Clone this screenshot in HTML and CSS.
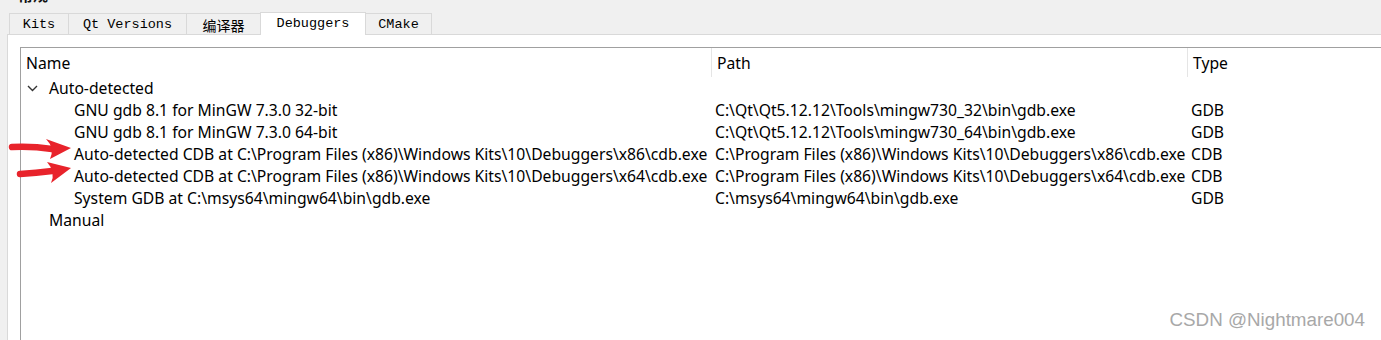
FILE: index.html
```html
<!DOCTYPE html>
<html lang="en">

<head>
    <meta charset="UTF-8">
    <title>Debuggers</title>
    <link rel="stylesheet" href="styles.css">
</head>

<body>
    <div class="titleClip"><span class="titleText">常规</span></div>

    <div class="tabBar">
        <div class="tab">Kits</div>
        <div class="tab">Qt Versions</div>
        <div class="tab">编译器</div>
        <div class="tab active">Debuggers</div>
        <div class="tab">CMake</div>
    </div>

    <div class="tabPanel">
        <div class="tree">
            <div class="treeHeader">
                <div class="colName">Name</div>
                <div class="colPath">Path</div>
                <div class="colType">Type</div>
            </div>

            <div class="row">
                <div class="colName group">
                    <svg class="chevron" width="11" height="7" viewBox="0 0 11 7">
                        <polyline points="1,1 5.5,5.5 10,1" stroke="#333" stroke-width="1.4" fill="none" />
                    </svg>Auto-detected
                </div>
                <div class="colPath"></div>
                <div class="colType"></div>
            </div>
            <div class="row">
                <div class="colName child">GNU gdb 8.1 for MinGW 7.3.0 32-bit</div>
                <div class="colPath">C:\Qt\Qt5.12.12\Tools\mingw730_32\bin\gdb.exe</div>
                <div class="colType">GDB</div>
            </div>
            <div class="row">
                <div class="colName child">GNU gdb 8.1 for MinGW 7.3.0 64-bit</div>
                <div class="colPath">C:\Qt\Qt5.12.12\Tools\mingw730_64\bin\gdb.exe</div>
                <div class="colType">GDB</div>
            </div>
            <div class="row">
                <div class="colName child">Auto-detected CDB at C:\Program Files (x86)\Windows Kits\10\Debuggers\x86\cdb.exe</div>
                <div class="colPath">C:\Program Files (x86)\Windows Kits\10\Debuggers\x86\cdb.exe</div>
                <div class="colType">CDB</div>
            </div>
            <div class="row">
                <div class="colName child">Auto-detected CDB at C:\Program Files (x86)\Windows Kits\10\Debuggers\x64\cdb.exe</div>
                <div class="colPath">C:\Program Files (x86)\Windows Kits\10\Debuggers\x64\cdb.exe</div>
                <div class="colType">CDB</div>
            </div>
            <div class="row">
                <div class="colName child">System GDB at C:\msys64\mingw64\bin\gdb.exe</div>
                <div class="colPath">C:\msys64\mingw64\bin\gdb.exe</div>
                <div class="colType">GDB</div>
            </div>
            <div class="row">
                <div class="colName group">Manual</div>
                <div class="colPath"></div>
                <div class="colType"></div>
            </div>
        </div>
    </div>

    <!-- annotation arrows drawn on top of the screenshot -->
    <svg class="arrows" width="80" height="50" viewBox="0 0 80 50">
        <path d="M12 7 Q32 6 52 9" stroke="#e8232b" stroke-width="6.5" stroke-linecap="round" fill="none" />
        <path d="M46 -1 L71 8 L50 19 Q55 8 46 -1 Z" fill="#e8232b" />
        <path d="M20 34 Q36 33 52 31" stroke="#e8232b" stroke-width="6.5" stroke-linecap="round" fill="none" />
        <path d="M47 22 L71 28 L51 43 Q56 32 47 22 Z" fill="#e8232b" />
    </svg>

    <div class="watermark">CSDN @Nightmare004</div>
</body>

</html>
```

FILE: styles.css
```css
body {
    margin: 0;
    background-color: #f0f0f0;
    font-family: "Noto Sans", sans-serif;
    width: 1381px;
    height: 340px;
    overflow: hidden;
    position: relative;
}

.titleClip {
    height: 13px;
    overflow: hidden;
    padding-left: 18px;
}

.titleText {
    display: block;
    margin-top: -14px;
    font-weight: bold;
    font-size: 15px;
    line-height: 17px;
    color: #111;
    font-family: "Noto Sans CJK SC", sans-serif;
}

.tabBar {
    display: flex;
    padding-left: 9px;
    height: 21px;
    align-items: flex-end;
}

.tab {
    height: 20px;
    line-height: 22px;
    border: 1px solid #d9d9d9;
    border-bottom: none;
    background-color: #f0f0f0;
    font-family: "Liberation Mono", monospace;
    font-size: 13.5px;
    color: #000;
    text-align: center;
    margin-left: -1px;
}

.tab:nth-child(1) { width: 58px; margin-left: 0; }
.tab:nth-child(2) { width: 117px; }
.tab:nth-child(3) { width: 73px; font-family: "Noto Sans CJK SC", sans-serif; font-size: 14px; }
.tab:nth-child(4) { width: 104px; }
.tab:nth-child(5) { width: 65px; }

.tab.active {
    background-color: #ffffff;
    height: 22px;
    line-height: 22px;
    margin-bottom: -1px;
    position: relative;
    z-index: 1;
}

.tabPanel {
    margin-left: 7px;
    background-color: #ffffff;
    border-top: 1px solid #d9d9d9;
    border-left: 1px solid #d9d9d9;
    padding: 12px 0 0 12px;
    height: 300px;
}

.tree {
    border-top: 1px solid #a0a0a0;
    border-left: 1px solid #a0a0a0;
    height: 100%;
    font-size: 15.7px;
    color: #000;
}

.treeHeader,
.row {
    display: flex;
    white-space: nowrap;
}

.treeHeader {
    height: 29px;
    align-items: center;
}

.treeHeader > div {
    height: 29px;
    line-height: 29px;
    padding-top: 1px;
}

.treeHeader .colPath,
.treeHeader .colType {
    border-left: 1px solid #e5e5e5;
}

.treeHeader .colName { padding-left: 5px; }
.treeHeader .colPath { padding-left: 5px; }
.treeHeader .colType { padding-left: 5px; }

.row {
    height: 22px;
    line-height: 22px;
}

.colName {
    width: 690px;
    flex: none;
    box-sizing: border-box;
}

.colPath {
    width: 476px;
    flex: none;
    box-sizing: border-box;
    padding-left: 4px;
}

.colType {
    flex: 1;
    box-sizing: border-box;
    padding-left: 4px;
}

.group {
    padding-left: 28px;
    position: relative;
}

.child {
    padding-left: 53px;
}

.chevron {
    position: absolute;
    left: 6px;
    top: 8px;
}

.arrows {
    position: absolute;
    left: 0;
    top: 140px;
    overflow: visible;
}

.watermark {
    position: absolute;
    right: 16px;
    bottom: 9px;
    font-family: "Liberation Sans", sans-serif;
    font-size: 18.8px;
    color: #a8a8a8;
}
```
